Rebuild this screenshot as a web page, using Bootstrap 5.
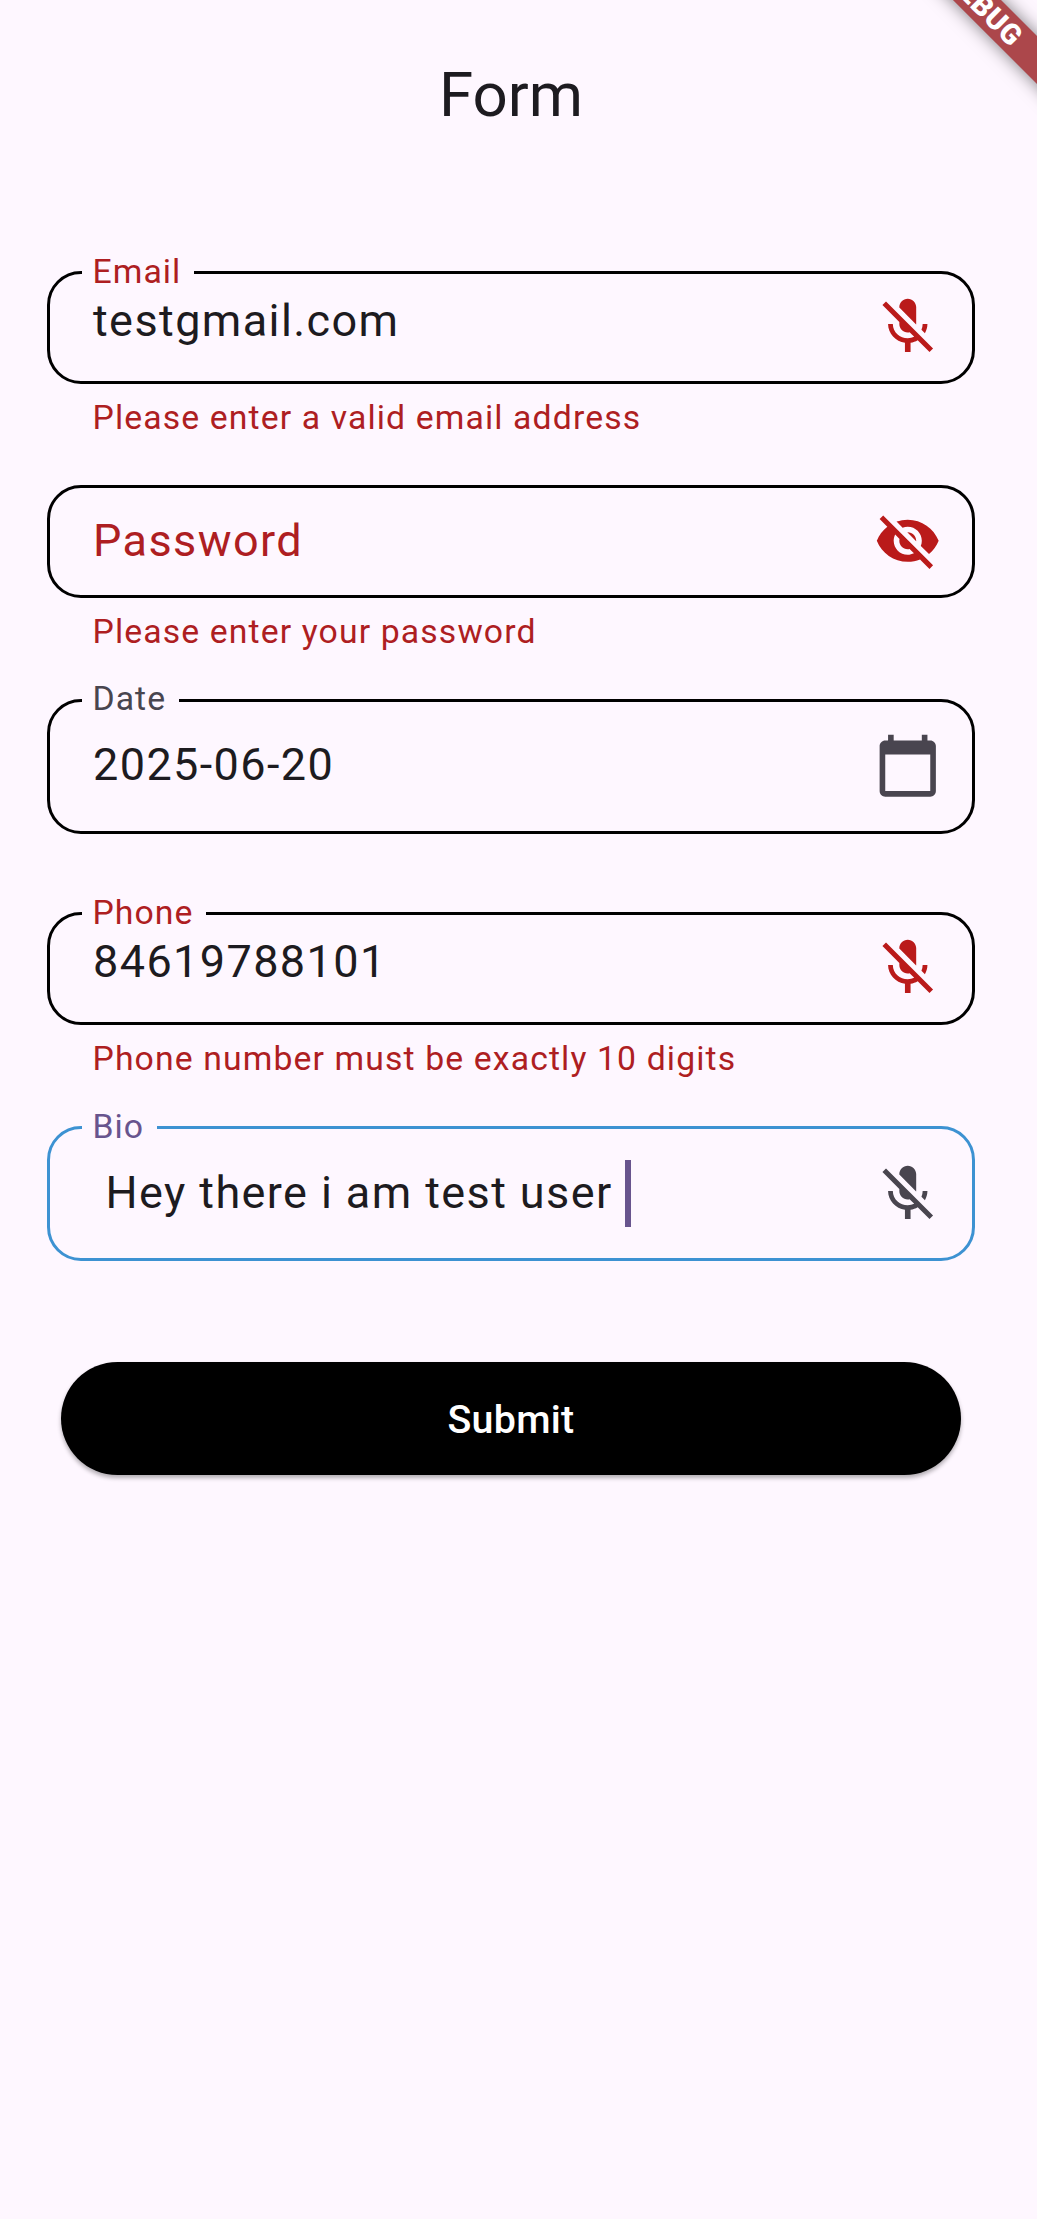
<!DOCTYPE html>
<html lang="en">
<head>
<meta charset="utf-8">
<meta name="viewport" content="width=device-width, initial-scale=1">
<title>Form</title>
<link href="https://cdn.jsdelivr.net/npm/bootstrap@5.3.0/dist/css/bootstrap.min.css" rel="stylesheet">
<style>
  body { background: #fef7ff; color: #1d1b20; font-family: Roboto, "Liberation Sans", sans-serif; }
  .screen { min-height: 2219px; }
  .page-title { font-size: 61.9px; line-height: 79px; padding-top: 56px; margin-bottom: 136px; font-weight: 400; }
  .form-body { padding: 0 62px 0 47px; }
  .page-head { padding-right: 15px; }
  .slot { height: 214px; }
  .slot-date { height: 213px; }
  .outline { height: 113px; border: 3px solid #000; border-radius: 34px; padding: 0 31px 0 43px; }
  .outline-tall { height: 135px; }
  .outline-active { border-color: #3d92d2; }
  .float-label { left: 32px; top: -25px; padding: 0 12.5px 0 10.5px; background: #fef7ff; font-size: 33.75px; line-height: 45px; letter-spacing: 1.05px; color: #49454f; }
  .slot-date .float-label { top: -26px; }
  .value { font-size: 45px; line-height: 67px; letter-spacing: 1.4px; white-space: pre; padding-top: 13px; }
  .value-mid { padding-top: 19px; }
  .value-tall { padding-top: 30px; }
  .slot-date .value-tall { padding-top: 29px; }
  .err { color: #ae1e22; }
  .focus-tint { color: #68548e; }
  .helper { font-size: 33.75px; line-height: 45px; letter-spacing: 1.12px; padding: 11px 0 0 45.5px; color: #ae1e22; }
  .ico { width: 67.5px; height: 67.5px; fill: #49454f; margin-top: 19px; }
  .outline-tall .ico { margin-top: 30.5px; }
  .slot-date .outline-tall .ico { margin-top: 30px; }
  .ico-err { fill: #ba1a1a; }
  .caret { width: 6px; height: 67px; background: #68548e; margin-top: 31px; }
  .submit-wrap { padding: 22px 14px 0 14px; }
  .btn-submit { height: 113px; padding: 2px 0 0; background: #000; color: #fff; font-size: 39.4px; font-weight: 500; letter-spacing: .28px; box-shadow: 0 3px 4px rgba(0,0,0,.3); }
  .ribbon-clip { inset: 0 0 auto auto; width: 200px; height: 200px; pointer-events: none; }
  .ribbon { width: 320px; height: 33.75px; line-height: 34px; left: 10px; top: 12.5px; transform: rotate(45deg); background: #ac474b; color: #fff; font-size: 28.7px; font-weight: 900; letter-spacing: .7px; box-shadow: 0 0 17px rgba(0,0,0,.5); padding-right: 64px; }
</style>
</head>
<body>
<svg class="d-none">
  <symbol id="mic-off" viewBox="0 0 24 24"><path d="M19 11h-1.7c0 .74-.16 1.43-.43 2.05l1.23 1.23c.56-.98.9-2.09.9-3.28zm-4.02.17c0-.06.02-.11.02-.17V5c0-1.66-1.34-3-3-3S9 3.34 9 5v.18l5.98 5.99zM4.27 3L3 4.27l6.01 6.01V11c0 1.66 1.33 3 2.99 3 .22 0 .44-.03.65-.08l1.66 1.66c-.71.33-1.5.52-2.31.52-2.76 0-5.3-2.1-5.3-5.1H5c0 3.41 2.72 6.23 6 6.72V21h2v-3.28c.91-.13 1.77-.45 2.54-.9L19.73 21 21 19.73 4.27 3z"/></symbol>
  <symbol id="eye-off" viewBox="0 0 24 24"><path d="M12 7c2.76 0 5 2.24 5 5 0 .65-.13 1.26-.36 1.83l2.92 2.92c1.51-1.26 2.7-2.89 3.43-4.75-1.73-4.39-6-7.5-11-7.5-1.4 0-2.74.25-3.98.7l2.16 2.16C10.74 7.13 11.35 7 12 7zM2 4.27l2.28 2.28.46.46C3.08 8.3 1.78 10.02 1 12c1.73 4.39 6 7.5 11 7.5 1.55 0 3.03-.3 4.38-.84l.42.42L19.73 22 21 20.73 3.27 3 2 4.27zM7.53 9.8l1.55 1.55c-.05.21-.08.43-.08.65 0 1.66 1.34 3 3 3 .22 0 .44-.03.65-.08l1.55 1.55c-.67.33-1.41.53-2.2.53-2.76 0-5-2.24-5-5 0-.79.2-1.53.53-2.2zm4.31-.78l3.15 3.15.02-.16c0-1.66-1.34-3-3-3l-.17.01z"/></symbol>
  <symbol id="calendar" viewBox="0 0 24 24"><path d="M20 3h-1V1h-2v2H7V1H5v2H4c-1.1 0-2 .9-2 2v16c0 1.1.9 2 2 2h16c1.1 0 2-.9 2-2V5c0-1.1-.9-2-2-2zm0 18H4V8h16v13z"/></symbol>
</svg>
<div class="screen position-relative overflow-hidden">
  <header class="page-head text-center"><h1 class="page-title">Form</h1></header>
  <main class="form-body">
    <div class="slot">
      <div class="outline position-relative d-flex align-items-start justify-content-between">
        <label class="float-label err position-absolute">Email</label>
        <div class="value">testgmail.com</div>
        <svg class="ico ico-err flex-shrink-0"><use href="#mic-off"/></svg>
      </div>
      <div class="helper">Please enter a valid email address</div>
    </div>
    <div class="slot">
      <div class="outline d-flex align-items-start justify-content-between">
        <div class="value value-mid err">Password</div>
        <svg class="ico ico-err flex-shrink-0"><use href="#eye-off"/></svg>
      </div>
      <div class="helper">Please enter your password</div>
    </div>
    <div class="slot slot-date">
      <div class="outline outline-tall position-relative d-flex align-items-start justify-content-between">
        <label class="float-label position-absolute">Date</label>
        <div class="value value-tall">2025-06-20</div>
        <svg class="ico flex-shrink-0"><use href="#calendar"/></svg>
      </div>
    </div>
    <div class="slot">
      <div class="outline position-relative d-flex align-items-start justify-content-between">
        <label class="float-label err position-absolute">Phone</label>
        <div class="value">84619788101</div>
        <svg class="ico ico-err flex-shrink-0"><use href="#mic-off"/></svg>
      </div>
      <div class="helper">Phone number must be exactly 10 digits</div>
    </div>
    <div class="slot">
      <div class="outline outline-tall outline-active position-relative d-flex align-items-start">
        <label class="float-label focus-tint position-absolute">Bio</label>
        <div class="value value-tall"> Hey there i am test user </div>
        <div class="caret"></div>
        <svg class="ico ms-auto flex-shrink-0"><use href="#mic-off"/></svg>
      </div>
    </div>
    <div class="submit-wrap">
      <button type="button" class="btn btn-submit rounded-pill border-0 w-100">Submit</button>
    </div>
  </main>
  <div class="ribbon-clip position-absolute overflow-hidden">
    <div class="ribbon position-absolute text-center">DEBUG</div>
  </div>
</div>
<script src="https://cdn.jsdelivr.net/npm/bootstrap@5.3.0/dist/js/bootstrap.bundle.min.js"></script>
</body>
</html>
